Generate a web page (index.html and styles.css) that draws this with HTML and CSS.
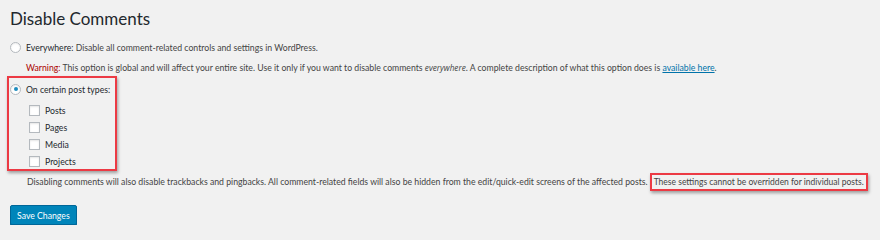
FILE: index.html
```html
<!DOCTYPE html>
<html>
<head>
<meta charset="utf-8">
<link rel="stylesheet" href="styles.css">
</head>
<body>
<div class="wrap">
  <h1 class="title">Disable Comments</h1>
  <div class="option">
    <span class="radio"></span>
    <span class="label"><strong>Everywhere:</strong> Disable all comment-related controls and settings in WordPress.</span>
  </div>
  <p class="warning"><span class="warn">Warning:</span> This option is global and will affect your entire site. Use it only if you want to disable comments <em>everywhere</em>. A complete description of what this option does is <a href="#">available here</a>.</p>
  <div class="boxed">
    <div class="option">
      <span class="radio checked"></span>
      <span class="label"><strong>On certain post types:</strong></span>
    </div>
    <ul class="types">
      <li><span class="check"></span>Posts</li>
      <li><span class="check"></span>Pages</li>
      <li><span class="check"></span>Media</li>
      <li><span class="check"></span>Projects</li>
    </ul>
  </div>
  <p class="desc">Disabling comments will also disable trackbacks and pingbacks. All comment-related fields will also be hidden from the edit/quick-edit screens of the affected posts.<span class="hl">These settings cannot be overridden for individual posts.</span></p>
  <button class="save">Save Changes</button>
</div>
</body>
</html>
```

FILE: styles.css
```css
html, body {
  margin: 0;
  padding: 0;
  background: #f1f1f1;
}
body {
  font-family: Lato, "Open Sans", sans-serif;
  color: #444;
  font-size: 8.7px;
}
.wrap {
  padding: 9px 0 0 10px;
}
.title {
  font-family: Lato, sans-serif;
  font-weight: 400;
  font-size: 17px;
  color: #23282d;
  margin: 0 0 10px 0;
  line-height: 20px;
}
.option {
  display: flex;
  align-items: center;
  gap: 5px;
  height: 16px;
  white-space: nowrap;
}
.radio {
  flex: none;
  width: 9px;
  height: 9px;
  border: 1px solid #b4b9be;
  border-radius: 50%;
  background: #fff;
  box-shadow: inset 0 1px 2px rgba(0,0,0,0.07);
  display: flex;
  align-items: center;
  justify-content: center;
}
.radio.checked::after {
  content: "";
  width: 4px;
  height: 4px;
  border-radius: 50%;
  background: #1e8cbe;
}
.label strong {
  font-weight: 400;
  color: #23282d;
}
.warning {
  margin: 6px 0 1px 16px;
  line-height: 14px;
}
.warning em {
  font-family: "Open Sans", sans-serif;
  font-style: italic;
  font-size: 8.2px;
}
.warn {
  color: #a00;
}
.warning a {
  color: #0073aa;
}
.boxed {
  display: block;
  box-sizing: border-box;
  margin-left: -3px;
  padding: 3px 0 0 1px;
  width: 110px;
  border: 2px solid #ec3a44;
  box-shadow: 1px 2px 3px rgba(0,0,0,0.35);
}
.types {
  list-style: none;
  margin: 5px 0 -1px 0;
  padding: 0 0 0 19px;
}
.types li {
  display: flex;
  align-items: center;
  gap: 5px;
  height: 17px;
  color: #23282d;
}
.check {
  flex: none;
  width: 9px;
  height: 9px;
  border: 1px solid #b4b9be;
  background: #fff;
  box-shadow: inset 0 1px 2px rgba(0,0,0,0.1);
}
.desc {
  margin: 4px 0 0 17px;
  line-height: 14px;
}
.hl {
  margin-left: 2px;
  border: 2px solid #ec3a44;
  padding: 2px 2px 2px 2px;
  font-size: 8.5px;
  box-shadow: 1px 2px 3px rgba(0,0,0,0.35);
}
.save {
  margin-top: 16px;
  font-family: Lato, sans-serif;
  font-size: 8.7px;
  color: #fff;
  background: #0085ba;
  border: 1px solid #006799;
  border-radius: 2px;
  height: 20px;
  padding: 0 6px;
  box-shadow: 0 1px 0 #006799;
  cursor: pointer;
}
```
